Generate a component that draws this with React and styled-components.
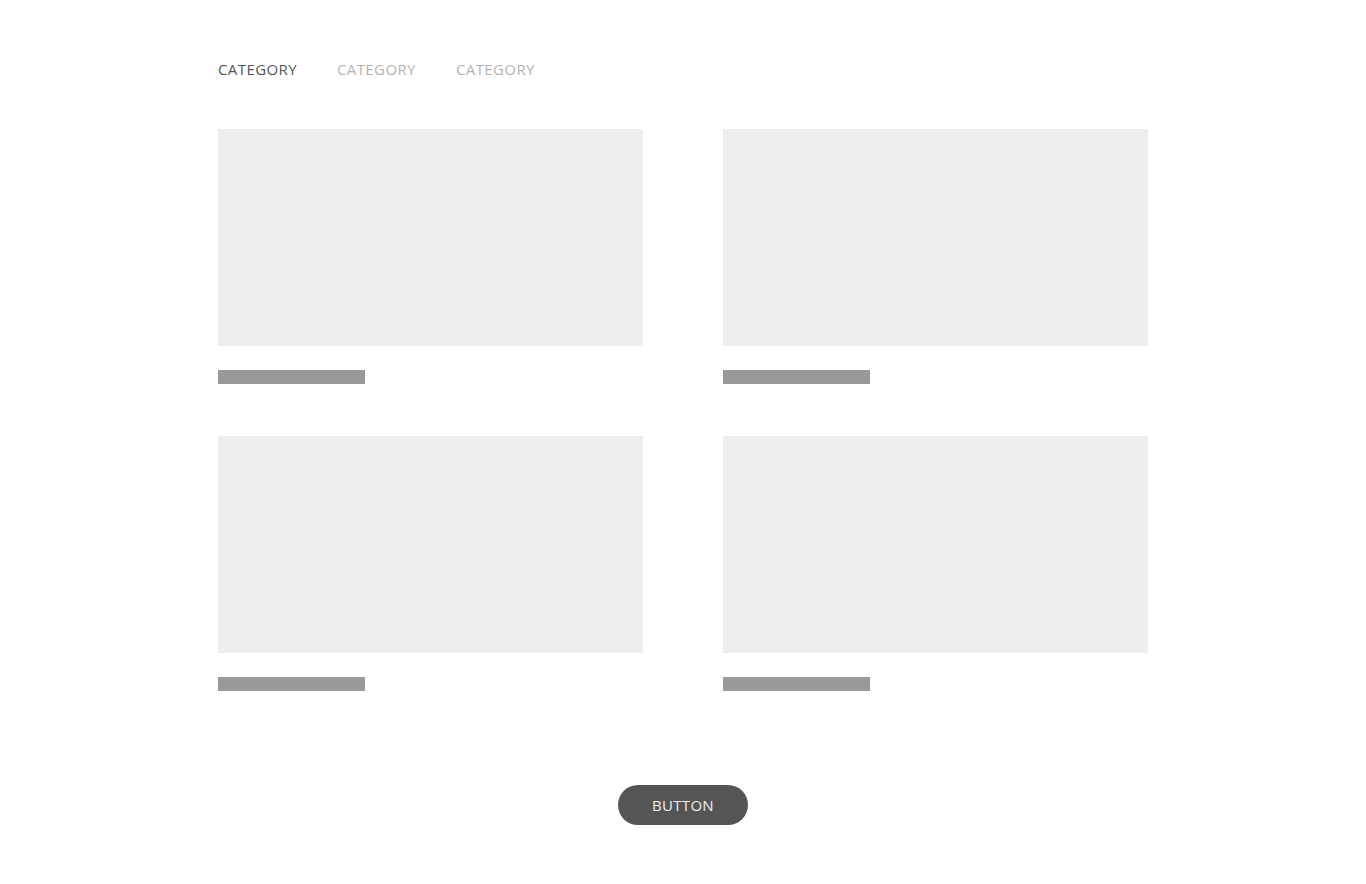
import React from 'react';
import styled, { createGlobalStyle } from 'styled-components';

const GlobalStyle = createGlobalStyle`
  body {
    margin: 0;
    background: #ffffff;
    font-family: "Open Sans", "Noto Sans", sans-serif;
  }
`;

const Page = styled.div`
  width: 930px;
  margin: 0 auto;
  padding-top: 59px;
  padding-bottom: 59px;
`;

const Tabs = styled.nav`
  display: flex;
  gap: 40px;
  height: 20px;
  margin-bottom: 50px;
`;

const Tab = styled.span`
  font-size: 15px;
  line-height: 20px;
  color: ${(p) => (p.active ? '#555555' : '#b3b3b3')};
  letter-spacing: 0.4px;
  cursor: pointer;
`;

const Grid = styled.div`
  display: grid;
  grid-template-columns: 425px 425px;
  column-gap: 80px;
  row-gap: 52px;
`;

const Card = styled.div`
  display: flex;
  flex-direction: column;
  gap: 24px;
`;

const Thumb = styled.div`
  height: 217px;
  background: #ededed;
`;

const Caption = styled.div`
  width: 147px;
  height: 14px;
  background: #999999;
`;

const Footer = styled.div`
  display: flex;
  justify-content: center;
  margin-top: 94px;
`;

const Button = styled.button`
  width: 130px;
  height: 40px;
  border: none;
  border-radius: 20px;
  background: #555555;
  color: #eeeeee;
  font-family: "Open Sans", "Noto Sans", sans-serif;
  font-size: 15px;
  letter-spacing: 0.3px;
  padding: 0;
  cursor: pointer;
`;

const App = () => {
  const cards = [1, 2, 3, 4];
  return (
    <>
      <GlobalStyle />
      <Page>
        <Tabs>
          <Tab active>CATEGORY</Tab>
          <Tab>CATEGORY</Tab>
          <Tab>CATEGORY</Tab>
        </Tabs>
        <Grid>
          {cards.map((c) => (
            <Card key={c}>
              <Thumb />
              <Caption />
            </Card>
          ))}
        </Grid>
        <Footer>
          <Button>BUTTON</Button>
        </Footer>
      </Page>
    </>
  );
};

export default App;
